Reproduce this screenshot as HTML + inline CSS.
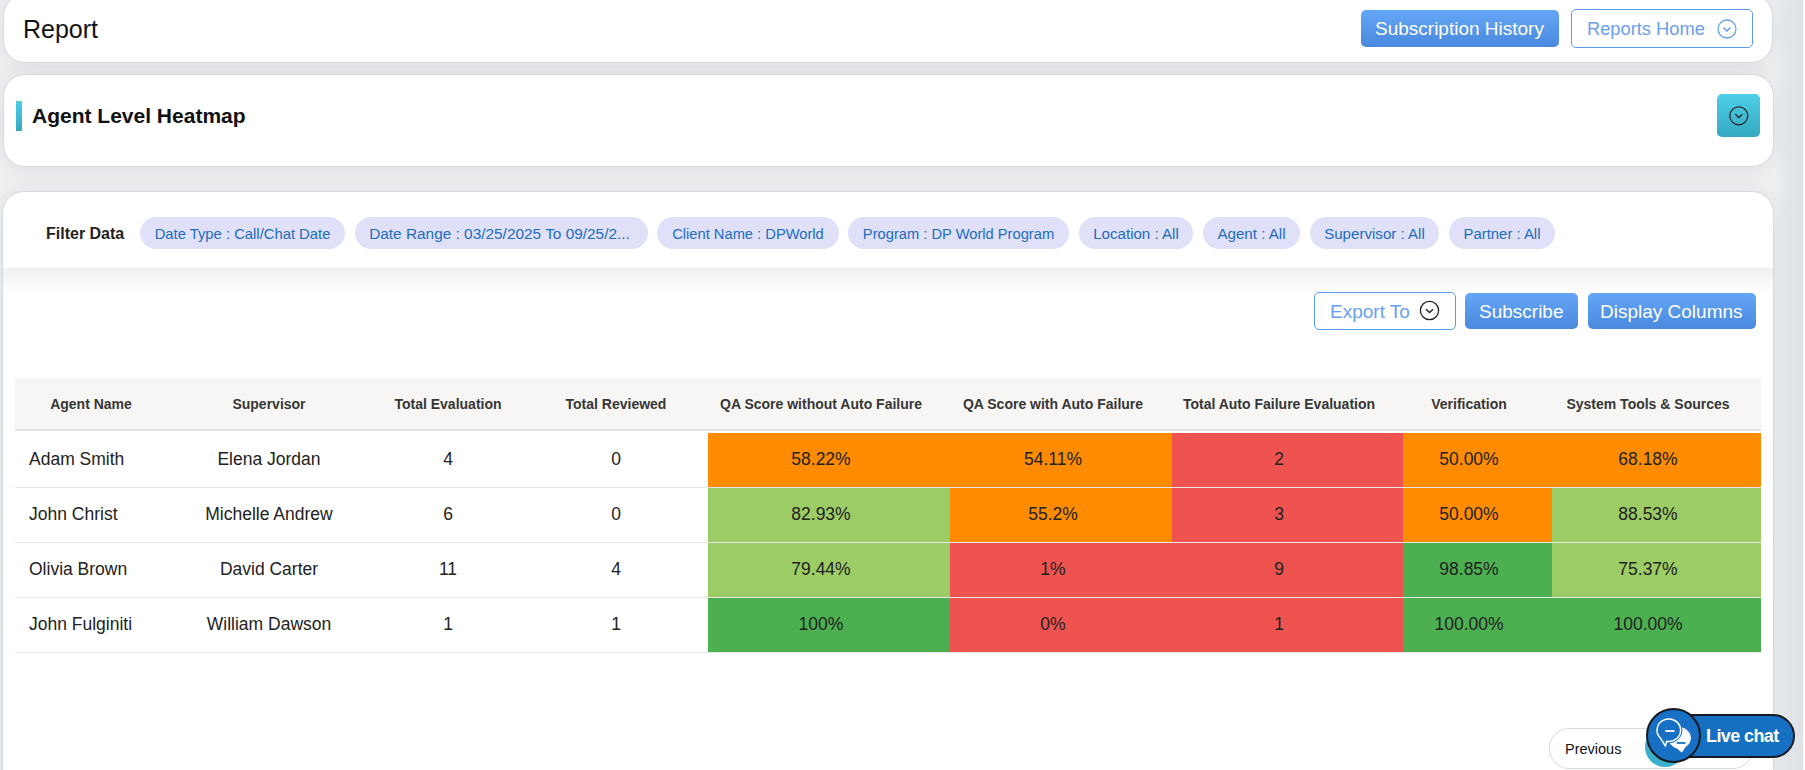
<!DOCTYPE html>
<html><head><meta charset="utf-8">
<style>
*{box-sizing:border-box;margin:0;padding:0}
html,body{width:1805px;height:770px;overflow:hidden}
body{position:relative;background:#eff0f2;font-family:"Liberation Sans",sans-serif;color:#111}
.abs{position:absolute}
.card{position:absolute;background:#fff;border:1px solid #d5dadd;border-radius:22px;box-shadow:0 2px 22px rgba(30,40,50,0.09)}
.t{position:absolute;white-space:nowrap;line-height:1}
.btn{position:absolute;border-radius:5px;color:#fff;font-size:19px;background:linear-gradient(#64a6f6,#4a89de);}
.obtn{position:absolute;border-radius:5px;border:1px solid #5d9df0;background:#fff;color:#6aa0ee;font-size:19px}
.chip{position:absolute;top:217px;height:32px;border-radius:16px;background:#e0e1f8;color:#226cc2;font-size:15px}
.chip span{position:absolute;top:8px;left:0;right:0;text-align:center;white-space:nowrap;line-height:18px}
.th{position:absolute;top:396px;font-size:14px;font-weight:700;color:#363636;white-space:nowrap;text-align:center;line-height:16px}
.cell{position:absolute}
.td{position:absolute;font-size:17.5px;color:#222;white-space:nowrap;text-align:center;line-height:20px}
</style></head>
<body>
<!-- right edge shade -->
<div class="abs" style="left:1774px;top:0;width:29px;height:770px;background:linear-gradient(90deg,rgba(232,234,237,0),#e2e5e8 55%,#dfe2e5)"></div>
<div class="abs" style="left:1803px;top:0;width:2px;height:770px;background:#fcfcfc"></div>

<!-- card 1 -->
<div class="card" style="left:3px;top:-6px;width:1770px;height:69px"></div>
<div class="t" style="left:23px;top:17px;font-size:25px;color:#111">Report</div>
<div class="btn" style="left:1361px;top:10px;width:198px;height:37px"><span class="t" style="left:14px;top:9px">Subscription History</span></div>
<div class="obtn" style="left:1571px;top:9px;width:182px;height:39px"><span class="t" style="left:15px;top:10px;font-size:18.3px">Reports Home</span>
<svg class="abs" style="left:145px;top:9px" width="20" height="20" viewBox="0 0 20 20"><circle cx="10" cy="10" r="9" fill="none" stroke="#5d9df0" stroke-width="1.3"/><path d="M6.5 8.5 L10 12 L13.5 8.5" fill="none" stroke="#5d9df0" stroke-width="1.5"/></svg>
</div>

<!-- card 2 -->
<div class="card" style="left:3px;top:74px;width:1771px;height:93px"></div>
<div class="abs" style="left:16px;top:101px;width:6px;height:30px;background:linear-gradient(#4dcde6,#36a9c3)"></div>
<div class="t" style="left:32px;top:105px;font-size:21px;font-weight:700;color:#111">Agent Level Heatmap</div>
<div class="abs" style="left:1717px;top:94px;width:43px;height:43px;border-radius:5px;background:linear-gradient(#4fcfe8,#35a8c2)">
<svg class="abs" style="left:11px;top:11px" width="21" height="21" viewBox="0 0 21 21"><circle cx="10.8" cy="10.8" r="9" fill="none" stroke="#2a2a2a" stroke-width="1.3"/><path d="M7.3 9.3 L10.8 12.6 L14.3 9.3" fill="none" stroke="#2a2a2a" stroke-width="1.4"/></svg>
</div>

<!-- card 3 -->
<div class="card" style="left:2px;top:191px;width:1772px;height:700px;overflow:hidden">
  <div class="abs" style="left:0;top:76px;width:100%;height:28px;background:linear-gradient(#efefef,#f7f7f7 40%,#fff)"></div>
</div>
<div class="t" style="left:46px;top:226px;font-size:16px;font-weight:700;color:#222">Filter Data</div>
<div class="chip" style="left:140px;width:205px"><span style="font-size:14.8px">Date Type : Call/Chat Date</span></div>
<div class="chip" style="left:355px;width:293px"><span style="font-size:15.4px;right:4px">Date Range : 03/25/2025 To 09/25/2...</span></div>
<div class="chip" style="left:657px;width:182px"><span style="font-size:14.7px">Client Name : DPWorld</span></div>
<div class="chip" style="left:848px;width:221px"><span style="font-size:14.7px">Program : DP World Program</span></div>
<div class="chip" style="left:1079px;width:114px"><span style="font-size:15.1px">Location : All</span></div>
<div class="chip" style="left:1203px;width:97px"><span style="font-size:15.1px">Agent : All</span></div>
<div class="chip" style="left:1310px;width:129px"><span style="font-size:15.1px">Supervisor : All</span></div>
<div class="chip" style="left:1449px;width:106px"><span style="font-size:14.9px">Partner : All</span></div>

<div class="obtn" style="left:1314px;top:292px;width:142px;height:38px"><span class="t" style="left:15px;top:9px">Export To</span>
<svg class="abs" style="left:104px;top:7px" width="21" height="21" viewBox="0 0 21 21"><circle cx="10.5" cy="10.5" r="9.1" fill="none" stroke="#222" stroke-width="1.3"/><path d="M7 9.2 L10.5 12.6 L14 9.2" fill="none" stroke="#222" stroke-width="1.4"/></svg>
</div>
<div class="btn" style="left:1465px;top:293px;width:113px;height:36px"><span class="t" style="left:14px;top:9px">Subscribe</span></div>
<div class="btn" style="left:1588px;top:293px;width:168px;height:36px"><span class="t" style="left:12px;top:9px">Display Columns</span></div>

<!-- table -->
<div class="abs" style="left:15px;top:378px;width:1746px;height:51px;background:#f7f6f5"></div>
<div class="abs" style="left:15px;top:429px;width:1746px;height:2px;background:#dde1e4"></div>
<!-- PAGER -->
<div class="abs" style="left:1549px;top:728px;width:204px;height:41px;border:1px solid #d3dbe1;border-radius:20px;background:#fff"></div>
<div class="t" style="left:1565px;top:742px;font-size:14.5px;color:#111">Previous</div>
<div class="abs" style="left:1645px;top:727px;width:40px;height:40px;border-radius:50%;background:#3bb0cc"></div>
<!-- LIVECHAT -->
<div class="abs" style="left:1660px;top:714px;width:135px;height:44px;border:2.5px solid #161a20;border-radius:22px;background:#1570c2"></div>
<div class="t" style="left:1706px;top:727px;font-size:18px;font-weight:700;color:#fff;letter-spacing:-0.6px">Live chat</div>
<div class="abs" style="left:1646px;top:708px;width:55px;height:55px;border:2.3px solid #161a20;border-radius:50%;background:#1770c4"></div>
<svg class="abs" style="left:1646px;top:708px" width="55" height="55" viewBox="0 0 55 55">
<path d="M39.0 38.92 A10.8 10.3 0 1 0 30.8 39.95 L35.8 44 Z" fill="#fff" stroke="#fff" stroke-width="1" stroke-linejoin="round"/>
<line x1="30.7" y1="35" x2="39.5" y2="35" stroke="#1770c4" stroke-width="1.8"/>
<path d="M20.75 33.23 A11.8 11.2 0 1 0 14.46 30.12 L19.4 38.2 Z" fill="#1770c4" stroke="#1770c4" stroke-width="3.6" stroke-linejoin="round"/>
<path d="M20.75 33.23 A11.8 11.2 0 1 0 14.46 30.12 L19.4 38.2 Z" fill="#1770c4" stroke="#fff" stroke-width="1.5" stroke-linejoin="round"/>
<line x1="19.2" y1="23" x2="28.5" y2="23" stroke="#fff" stroke-width="1.8"/>
</svg>
<!-- TABLE -->
<div class="th" style="left:-59px;width:300px">Agent Name</div>
<div class="th" style="left:119px;width:300px">Supervisor</div>
<div class="th" style="left:298px;width:300px">Total Evaluation</div>
<div class="th" style="left:466px;width:300px">Total Reviewed</div>
<div class="th" style="left:671px;width:300px">QA Score without Auto Failure</div>
<div class="th" style="left:903px;width:300px">QA Score with Auto Failure</div>
<div class="th" style="left:1129px;width:300px">Total Auto Failure Evaluation</div>
<div class="th" style="left:1319px;width:300px">Verification</div>
<div class="th" style="left:1498px;width:300px">System Tools &amp; Sources</div>
<div class="abs" style="left:15px;top:487px;width:1746px;height:1px;background:#e6e7e9"></div>
<div class="cell" style="left:708px;top:433px;width:242px;height:54px;background:#ff8c00"></div>
<div class="cell" style="left:950px;top:433px;width:222px;height:54px;background:#ff8c00"></div>
<div class="cell" style="left:1172px;top:433px;width:231px;height:54px;background:#ef5350"></div>
<div class="cell" style="left:1403px;top:433px;width:149px;height:54px;background:#ff8c00"></div>
<div class="cell" style="left:1552px;top:433px;width:209px;height:54px;background:#ff8c00"></div>
<div class="td" style="left:29px;top:449px;text-align:left">Adam Smith</div>
<div class="td" style="left:119px;top:449px;width:300px">Elena Jordan</div>
<div class="td" style="left:298px;top:449px;width:300px">4</div>
<div class="td" style="left:466px;top:449px;width:300px">0</div>
<div class="td" style="left:671px;top:449px;width:300px">58.22%</div>
<div class="td" style="left:903px;top:449px;width:300px">54.11%</div>
<div class="td" style="left:1129px;top:449px;width:300px">2</div>
<div class="td" style="left:1319px;top:449px;width:300px">50.00%</div>
<div class="td" style="left:1498px;top:449px;width:300px">68.18%</div>
<div class="abs" style="left:15px;top:542px;width:1746px;height:1px;background:#e6e7e9"></div>
<div class="cell" style="left:708px;top:488px;width:242px;height:54px;background:#9ccc65"></div>
<div class="cell" style="left:950px;top:488px;width:222px;height:54px;background:#ff8c00"></div>
<div class="cell" style="left:1172px;top:488px;width:231px;height:54px;background:#ef5350"></div>
<div class="cell" style="left:1403px;top:488px;width:149px;height:54px;background:#ff8c00"></div>
<div class="cell" style="left:1552px;top:488px;width:209px;height:54px;background:#9ccc65"></div>
<div class="td" style="left:29px;top:504px;text-align:left">John Christ</div>
<div class="td" style="left:119px;top:504px;width:300px">Michelle Andrew</div>
<div class="td" style="left:298px;top:504px;width:300px">6</div>
<div class="td" style="left:466px;top:504px;width:300px">0</div>
<div class="td" style="left:671px;top:504px;width:300px">82.93%</div>
<div class="td" style="left:903px;top:504px;width:300px">55.2%</div>
<div class="td" style="left:1129px;top:504px;width:300px">3</div>
<div class="td" style="left:1319px;top:504px;width:300px">50.00%</div>
<div class="td" style="left:1498px;top:504px;width:300px">88.53%</div>
<div class="abs" style="left:15px;top:597px;width:1746px;height:1px;background:#e6e7e9"></div>
<div class="cell" style="left:708px;top:543px;width:242px;height:54px;background:#9ccc65"></div>
<div class="cell" style="left:950px;top:543px;width:222px;height:54px;background:#ef5350"></div>
<div class="cell" style="left:1172px;top:543px;width:231px;height:54px;background:#ef5350"></div>
<div class="cell" style="left:1403px;top:543px;width:149px;height:54px;background:#4caf50"></div>
<div class="cell" style="left:1552px;top:543px;width:209px;height:54px;background:#9ccc65"></div>
<div class="td" style="left:29px;top:559px;text-align:left">Olivia Brown</div>
<div class="td" style="left:119px;top:559px;width:300px">David Carter</div>
<div class="td" style="left:298px;top:559px;width:300px">11</div>
<div class="td" style="left:466px;top:559px;width:300px">4</div>
<div class="td" style="left:671px;top:559px;width:300px">79.44%</div>
<div class="td" style="left:903px;top:559px;width:300px">1%</div>
<div class="td" style="left:1129px;top:559px;width:300px">9</div>
<div class="td" style="left:1319px;top:559px;width:300px">98.85%</div>
<div class="td" style="left:1498px;top:559px;width:300px">75.37%</div>
<div class="abs" style="left:15px;top:652px;width:1746px;height:1px;background:#e6e7e9"></div>
<div class="cell" style="left:708px;top:598px;width:242px;height:54px;background:#4caf50"></div>
<div class="cell" style="left:950px;top:598px;width:222px;height:54px;background:#ef5350"></div>
<div class="cell" style="left:1172px;top:598px;width:231px;height:54px;background:#ef5350"></div>
<div class="cell" style="left:1403px;top:598px;width:149px;height:54px;background:#4caf50"></div>
<div class="cell" style="left:1552px;top:598px;width:209px;height:54px;background:#4caf50"></div>
<div class="td" style="left:29px;top:614px;text-align:left">John Fulginiti</div>
<div class="td" style="left:119px;top:614px;width:300px">William Dawson</div>
<div class="td" style="left:298px;top:614px;width:300px">1</div>
<div class="td" style="left:466px;top:614px;width:300px">1</div>
<div class="td" style="left:671px;top:614px;width:300px">100%</div>
<div class="td" style="left:903px;top:614px;width:300px">0%</div>
<div class="td" style="left:1129px;top:614px;width:300px">1</div>
<div class="td" style="left:1319px;top:614px;width:300px">100.00%</div>
<div class="td" style="left:1498px;top:614px;width:300px">100.00%</div>
<!-- /TABLE -->
</body></html>
